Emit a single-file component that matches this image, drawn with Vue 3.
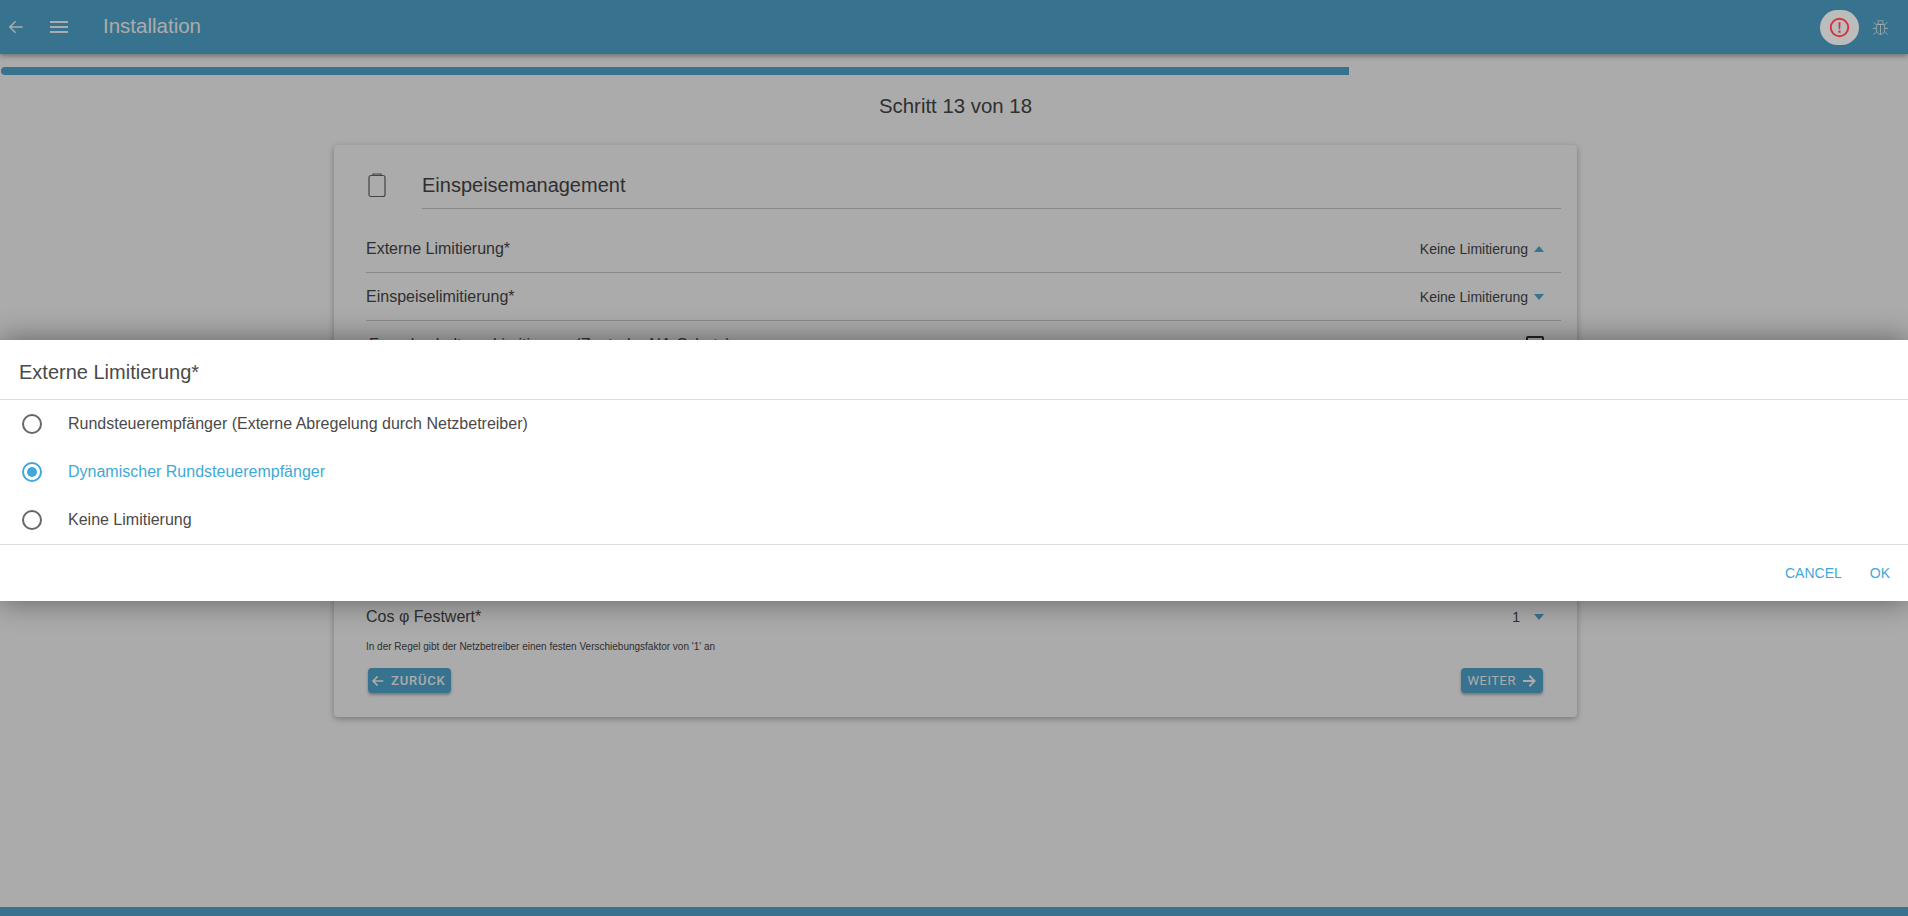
<template>
  <div class="page">
    <header class="toolbar">
      <button class="tool-btn back-btn">
        <svg width="20" height="20" viewBox="0 0 24 24"><path d="M20 12H5M11.500 5 4.500 12l7 7" fill="none" stroke="currentColor" stroke-width="1.800" /></svg>
      </button>
      <button class="tool-btn menu-btn">
        <svg width="24" height="24" viewBox="0 0 24 24"><path d="M3 6h18v2H3zM3 11h18v2H3zM3 16h18v2H3z" fill="currentColor" /></svg>
      </button>
      <div class="toolbar-title">Installation</div>
      <div class="toolbar-end">
        <span class="alert-pill">
          <svg width="21" height="21" viewBox="0 0 24 24">
            <circle cx="12" cy="12" r="10" fill="none" stroke="#d2333f" stroke-width="2.200" />
            <path d="M10.800 6h2.400l-.4 8h-1.600zM10.800 15.500h2.400v2.400h-2.400z" fill="#d2333f" />
          </svg>
        </span>
        <svg class="bug" width="17" height="19" viewBox="0 0 22 24" fill="none" stroke="currentColor" stroke-width="1.100">
          <path d="M7.500 8c0-3 1.500-5 3.500-5s3.500 2 3.500 5zM6.500 8h9c.8 2 1 4 1 6 0 4-2.500 7-5.500 7s-5.500-3-5.500-7c0-2 .2-4 1-6z" />
          <path d="M11 8v13M2 5l4 4M20 5l-4 4M1 13h4.500M21 13h-4.500M2 21l4-3.500M20 21l-4-3.500M7 2l1.500 2M15 2l-1.500 2" />
        </svg>
      </div>
    </header>

    <div class="progress"><div class="progress-fill" :style="{ width: progress + '%' }"></div></div>
    <div class="step">Schritt 13 von 18</div>

    <main class="card">
      <div class="card-head">
        <svg class="clip" width="22" height="26" viewBox="0 0 22 26" fill="none" stroke="#666" stroke-width="1.200">
          <rect x="3" y="3.500" width="16" height="21" rx="2" />
          <path d="M7 3.500V2h8v1.500" />
        </svg>
        <h2 class="card-title">Einspeisemanagement</h2>
      </div>

      <div v-for="row in selectRows" :key="row.label" class="row">
        <span>{{ row.label }}</span>
        <span class="row-value">{{ row.value }}<i class="caret" :class="{ up: row.open }"></i></span>
      </div>

      <div class="row row-indent">
        <span>Fernabschaltung Limitierung (Zentraler NA-Schutz)</span>
        <span class="checkbox"></span>
      </div>

      <!-- rows behind the dialog -->
      <div class="hidden-rows"></div>

      <div class="row row-plain">
        <span>Cos φ Festwert*</span>
        <span class="row-value"><span class="one">1</span><i class="caret"></i></span>
      </div>
      <p class="hint">In der Regel gibt der Netzbetreiber einen festen Verschiebungsfaktor von '1' an</p>

      <div class="actions">
        <button class="btn back">
          <svg width="16" height="16" viewBox="0 0 24 24"><path d="M20 12H5M11.500 5l-7 7 7 7" fill="none" stroke="currentColor" stroke-width="2.400" /></svg>
          <span class="spaced">ZURÜCK</span>
        </button>
        <button class="btn next">
          <span>WEITER</span>
          <svg width="18" height="18" viewBox="0 0 24 24"><path d="M4 12h15M12.500 5l7 7-7 7" fill="none" stroke="currentColor" stroke-width="2.400" /></svg>
        </button>
      </div>
    </main>

    <footer class="footer"></footer>

    <div class="backdrop"></div>
    <section class="dialog">
      <div class="dialog-title">Externe Limitierung*</div>
      <div class="dialog-list">
        <label
          v-for="opt in options"
          :key="opt"
          class="option"
          :class="{ checked: opt === selected }"
          @click="selected = opt"
        >
          <span class="radio"></span>
          <span>{{ opt }}</span>
        </label>
      </div>
      <div class="dialog-buttons">
        <button class="text-btn">CANCEL</button>
        <button class="text-btn">OK</button>
      </div>
    </section>
  </div>
</template>

<script setup>
import { ref } from 'vue';

const progress = 70.7;

const selectRows = [
  { label: 'Externe Limitierung*', value: 'Keine Limitierung', open: true },
  { label: 'Einspeiselimitierung*', value: 'Keine Limitierung', open: false }
];

const options = [
  'Rundsteuerempfänger (Externe Abregelung durch Netzbetreiber)',
  'Dynamischer Rundsteuerempfänger',
  'Keine Limitierung'
];

const selected = ref(options[1]);
</script>

<style>
html, body {
  margin: 0;
  height: 100%;
  overflow: hidden;
}
</style>

<style scoped>
.page {
  position: relative;
  display: flex;
  flex-direction: column;
  height: 916px;
  background: #fff;
  color: #484848;
  font-family: "Liberation Sans", Arial, sans-serif;
  overflow: hidden;
}

.toolbar {
  display: flex;
  align-items: center;
  height: 54px;
  flex-shrink: 0;
  background: #52abd5;
  color: #fff;
  box-shadow: 0 2px 5px rgba(0, 0, 0, 0.35);
}

.tool-btn {
  display: flex;
  padding: 0;
  border: none;
  background: none;
  color: inherit;
}

.back-btn { margin-left: 6px; }
.menu-btn { margin-left: 21px; }

.toolbar-title {
  margin: -2px 0 0 32px;
  font-size: 20.500px;
}

.toolbar-end {
  display: flex;
  align-items: center;
  gap: 13px;
  margin-left: auto;
  margin-right: 19px;
}

/* sits above the backdrop, it stays lighter than the page */
.alert-pill {
  position: relative;
  z-index: 1;
  display: flex;
  align-items: center;
  justify-content: center;
  width: 39px;
  height: 35px;
  border-radius: 18px;
  background: #bcbcbc;
}

.progress {
  height: 8px;
  margin: 13px 0 0 1px;
}

.progress-fill {
  height: 100%;
  border-radius: 4px 0 0 4px;
  background: #52abd5;
}

.step {
  margin-top: 19px;
  padding-left: 3px;
  text-align: center;
  font-size: 20.400px;
  line-height: 24px;
}

.card {
  width: 1243px;
  height: 572px;
  margin: 27px 0 0 334px;
  padding: 0 32px;
  box-sizing: border-box;
  border-radius: 4px;
  background: #fff;
  box-shadow: 0 2px 6px rgba(0, 0, 0, 0.3);
}

.card-head {
  display: flex;
  align-items: flex-start;
  height: 80px;
}

.clip {
  margin-top: 27px;
}

.card-title {
  flex: 1;
  margin: 16px -16px 0 34px;
  height: 47px;
  border-bottom: 1px solid #ccc;
  font-size: 20px;
  font-weight: 400;
  line-height: 49px;
}

.row {
  display: flex;
  align-items: center;
  justify-content: space-between;
  height: 48px;
  margin-right: -16px;
  padding: 1px 17px 0 0;
  border-bottom: 1px solid #ccc;
  box-sizing: border-box;
  font-size: 16px;
}

.row-plain {
  border-bottom: none;
}

.row-indent {
  padding-left: 3px;
}

.row-value {
  display: flex;
  align-items: center;
  font-size: 14px;
}

.one {
  margin-right: 8px;
}

.caret {
  width: 0;
  height: 0;
  margin-left: 6px;
  border-left: 5px solid transparent;
  border-right: 5px solid transparent;
  border-top: 6px solid #52abd5;
}

.caret.up {
  border-top: none;
  border-bottom: 6px solid #52abd5;
}

.checkbox {
  width: 14px;
  height: 14px;
  border: 2px solid #333;
  border-radius: 2px;
}

.hidden-rows {
  height: 223px;
}

.hint {
  margin: 0;
  font-size: 10px;
  line-height: 14px;
}

.actions {
  display: flex;
  justify-content: space-between;
  margin: 14px 0 0 2px;
  padding-right: 2px;
}

.btn {
  display: flex;
  align-items: center;
  height: 25px;
  padding: 0 5px;
  border: none;
  border-radius: 4px;
  background: #52abd5;
  color: #fff;
  font-family: Roboto, "Liberation Sans", sans-serif;
  font-size: 13px;
  font-weight: 500;
  box-shadow: 0 2px 3px rgba(0, 0, 0, 0.3);
}

.back {
  padding-left: 2px;
}

.next {
  font-weight: 400;
}

.spaced {
  margin-left: 5px;
  letter-spacing: 0.8px;
}

.next span {
  margin: 0 4px 0 2px;
  letter-spacing: 0.5px;
}

.footer {
  height: 9px;
  margin-top: auto;
  background: #52abd5;
}

.backdrop {
  position: absolute;
  inset: 0;
  background: rgba(0, 0, 0, 0.33);
}

.dialog {
  position: absolute;
  left: 0;
  right: 0;
  top: 340px;
  height: 261px;
  background: #fff;
  box-shadow: 0 0 28px rgba(0, 0, 0, 0.45);
  color: #4a4a4a;
}

.dialog-title {
  height: 59px;
  padding-left: 19px;
  border-bottom: 1px solid #ddd;
  font-size: 20px;
  line-height: 64px;
}

.dialog-list {
  height: 144px;
  border-bottom: 1px solid #ddd;
}

.option {
  display: flex;
  align-items: center;
  height: 48px;
  padding-left: 22px;
  font-size: 16px;
  gap: 26px;
}

.radio {
  position: relative;
  width: 16px;
  height: 16px;
  border: 2px solid #666;
  border-radius: 50%;
}

.option.checked {
  color: #3fa9d6;
}

.option.checked .radio {
  border-color: #3fa9d6;
}

.option.checked .radio::after {
  content: "";
  position: absolute;
  inset: 3px;
  border-radius: 50%;
  background: #3fa9d6;
}

.dialog-buttons {
  display: flex;
  justify-content: flex-end;
  gap: 28px;
  padding: 20px 18px 0 0;
}

.text-btn {
  padding: 0;
  border: none;
  background: none;
  color: #3fa9d6;
  font-family: inherit;
  font-size: 14px;
}
</style>
